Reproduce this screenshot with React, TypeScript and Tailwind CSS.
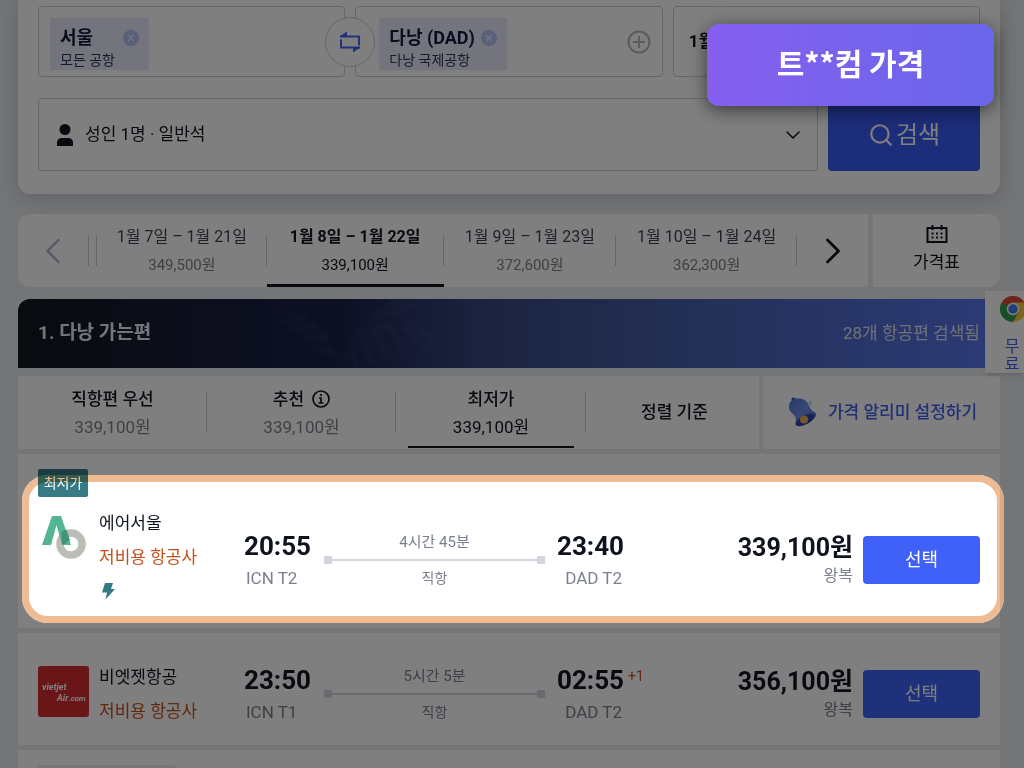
import { ChevronDown, ChevronLeft, ChevronRight, Search } from "lucide-react";
import clsx from "clsx";

const dates = [
  { label: "1월 7일 – 1월 21일", price: "349,500원" },
  { label: "1월 8일 – 1월 22일", price: "339,100원", active: true },
  { label: "1월 9일 – 1월 23일", price: "372,600원" },
  { label: "1월 10일 – 1월 24일", price: "362,300원" },
];

type Flight = {
  airline: string;
  logo: React.ReactNode;
  depart: string;
  from: string;
  arrive: string;
  to: string;
  duration: string;
  price: string;
  nextDay?: string;
  lowest?: boolean;
};

const flights: Flight[] = [
  {
    airline: "에어서울",
    logo: <AirSeoulLogo />,
    depart: "20:55",
    from: "ICN T2",
    arrive: "23:40",
    to: "DAD T2",
    duration: "4시간 45분",
    price: "339,100원",
    lowest: true,
  },
  {
    airline: "비엣젯항공",
    logo: <VietjetLogo />,
    depart: "23:50",
    from: "ICN T1",
    arrive: "02:55",
    to: "DAD T2",
    duration: "5시간 5분",
    price: "356,100원",
    nextDay: "+1",
  },
];

function AirSeoulLogo() {
  return (
    <svg viewBox="0 0 51 51" className="h-[51px] w-[51px] shrink-0">
      <path d="M14 4h9l10 29h-9L18.500 13 13 33H4z" fill="#53b592" />
      <circle cx="33" cy="32" r="11" fill="none" stroke="#8f968a" strokeOpacity="0.62" strokeWidth="7.500" />
      <path d="M23.500 20.500a15 15 0 0 1 5-3L32 28.500a4 4 0 0 0-4 3l-4 1z" fill="#3f9377" />
    </svg>
  );
}

function VietjetLogo() {
  return (
    <svg viewBox="0 0 51 51" className="h-[51px] w-[51px] shrink-0">
      <rect width="51" height="51" rx="3" fill="#d42a2f" />
      <g fill="#fff" fontFamily="Roboto, sans-serif" fontStyle="italic" fontWeight="700" fontSize="9">
        <text x="4" y="24">vietjet</text>
        <text x="19" y="35">
          Air<tspan fontSize="8">.com</tspan>
        </text>
      </g>
    </svg>
  );
}

function ChromeLogo() {
  return (
    <svg viewBox="0 0 48 48" className="h-[26px] w-[26px] shrink-0">
      <circle cx="24" cy="24" r="24" fill="#f8c93c" />
      <path d="M24 24 3.200 12A24 24 0 0 0 24 48l10.400-18z" fill="#2f9e4f" />
      <path d="M3.200 12a24 24 0 0 1 41.600 0H24L13.600 30z" fill="#dc4a3d" />
      <path d="M3.200 12 13.600 30 24 24z" fill="#2f9e4f" />
      <circle cx="24" cy="24" r="11.500" fill="#fff" />
      <circle cx="24" cy="24" r="8.800" fill="#3f7de8" />
    </svg>
  );
}

function BellIcon() {
  return (
    <svg viewBox="0 0 32 34" className="h-[34px] w-8 shrink-0">
      <defs>
        <linearGradient id="bell" x1="0" y1="0" x2="1" y2="1">
          <stop offset="0" stopColor="#4c6cd8" />
          <stop offset="0.5" stopColor="#6f90ea" />
          <stop offset="1" stopColor="#3f5cc8" />
        </linearGradient>
      </defs>
      <path d="m21 4 2 2 2.500-2-.5 3.500L27 9l-3 .5z" fill="#b8d4e8" />
      <circle cx="7.500" cy="3.500" r="2" fill="#2c47a8" />
      <path d="M3 11C3 5 7 2.500 12 2.500c6 0 9 2.500 11 7 1.500 4 3 5 6 7 2.500 2 .5 5.500-4 8.500-5 3.500-11.500 5.500-14 4-2-1.500-.5-5-2-8.500C7.500 17.500 3 16 3 11z" fill="url(#bell)" />
      <ellipse cx="19" cy="24" rx="10.500" ry="4.500" transform="rotate(-27 19 24)" fill="#2b46ad" />
      <circle cx="18" cy="23.500" r="4" fill="#f0b04c" />
    </svg>
  );
}

function CalendarIcon() {
  return (
    <svg viewBox="0 0 22 20" className="h-5 w-[22px]" fill="none" stroke="#0f1320" strokeWidth="2">
      <path d="M1.500 4h19v14h-19zM6.500 1v5M15.500 1v5" />
      <path d="M5.500 9.500h11M5.500 13.500h11" strokeDasharray="2 2.500" />
    </svg>
  );
}

function RemoveButton({ label }: { label: string }) {
  return (
    <button aria-label={label} className="flex h-4 w-4 items-center justify-center rounded-full bg-[#b4c0f4]">
      <svg viewBox="0 0 8 8" className="h-2 w-2" stroke="#e6eafa" strokeWidth="1.200">
        <path d="m1 1 6 6M7 1 1 7" />
      </svg>
    </button>
  );
}

function CityChip({ name, airport }: { name: string; airport: string }) {
  return (
    <div className="mt-1 min-w-[99px] bg-[#e6e9f8] px-2.5 pt-2">
      <div className="flex h-6 items-center justify-between gap-1.5">
        <strong className="text-lg font-bold text-[#0f1b3d]">{name}</strong>
        <RemoveButton label={`${name} 삭제`} />
      </div>
      <p className="text-sm leading-5 text-[#2c3756]">{airport}</p>
    </div>
  );
}

function SearchPanel() {
  return (
    <section className="shrink-0 rounded-b-xl bg-white px-5 pt-1.5 pb-[23px] shadow-[0_4px_20px_rgba(60,60,90,0.22)]">
      <div className="grid grid-cols-3 gap-2.5">
        <div className="flex h-[71px] items-center rounded border border-[#c9cdd6] px-[11px]">
          <CityChip name="서울" airport="모든 공항" />
        </div>
        <div className="relative flex h-[71px] items-center justify-between rounded border border-[#c9cdd6] pr-[11px] pl-[23px]">
          <button
            aria-label="출발지와 도착지 바꾸기"
            className="absolute top-2.5 -left-[31px] flex h-[50px] w-[50px] items-center justify-center rounded-full border border-[#c9cdd6] bg-white"
          >
            <svg viewBox="0 0 24 24" className="h-6 w-6" fill="none" stroke="#4664f0" strokeWidth="2">
              <path d="M2 6.500h19v9M22 17.500H3v-8" />
              <path d="M1.500 6.500 9 1.500v5zM22.500 17.500 15 22.500v-5z" fill="#4664f0" stroke="none" />
            </svg>
          </button>
          <CityChip name="다낭 (DAD)" airport="다낭 국제공항" />
          <button aria-label="도착지 추가">
            <svg viewBox="0 0 24 24" className="h-6 w-6" fill="none" stroke="#b4b6be" strokeWidth="2">
              <circle cx="12" cy="12" r="10.500" />
              <path d="M12 6v12M6 12h12" />
            </svg>
          </button>
        </div>
        <button className="h-[71px] rounded border border-[#c9cdd6] px-[15px] text-left text-[17px] font-bold text-[#0f1320]">
          1월 8일
        </button>
      </div>

      <div className="mt-[21px] flex gap-2.5">
        <div className="relative flex h-[73px] flex-1 items-center rounded border border-[#c9cdd6]">
          <svg viewBox="0 0 18 22" className="absolute left-[17px] h-[22px] w-[18px]" fill="#10131f">
            <circle cx="9" cy="5.500" r="5.500" />
            <path d="M1 22v-3.500a4.500 4.500 0 0 1 4.500-4.500h7a4.500 4.500 0 0 1 4.500 4.500V22z" />
          </svg>
          <select
            aria-label="인원 및 좌석 등급"
            className="h-full w-full appearance-none bg-transparent pr-12 pl-[46px] text-[17px] text-[#10131f]"
          >
            <option>성인 1명 · 일반석</option>
          </select>
          <ChevronDown className="pointer-events-none absolute right-3 h-6 w-6 text-[#10131f]" strokeWidth={1.5} />
        </div>
        <button className="flex w-[152px] items-center justify-center gap-0.5 rounded bg-[#3859f2] text-2xl text-white">
          <Search className="h-[26px] w-[26px]" strokeWidth={2} />
          검색
        </button>
      </div>
    </section>
  );
}

function DateStrip() {
  return (
    <div className="mt-5 flex h-[73px] shrink-0 gap-[5px]">
      <div className="flex flex-1 items-center rounded-l-xl bg-white">
        <button aria-label="이전 날짜" className="flex w-[70px] justify-center text-[#a9afc4]">
          <ChevronLeft className="h-11 w-11" strokeWidth={1.3} />
        </button>
        <div className="h-[31px] w-[9px] border-x border-[#c9cdd6]" />
        <div className="grid h-full flex-1 grid-cols-[170fr_177fr_173fr_181fr]">
          {dates.map((date) => (
            <button
              key={date.label}
              className={clsx(
                "relative flex flex-col items-center pt-[11px]",
                date.active ? "text-[#0f1320]" : "text-[#3b4258]"
              )}
            >
              <span className={clsx("text-base leading-6", date.active && "font-bold")}>{date.label}</span>
              <span className={clsx("mt-1 text-[15px] leading-6", !date.active && "text-[#7f828c]")}>
                {date.price}
              </span>
              <span className="absolute top-[21px] right-0 h-[31px] w-px bg-[#c9cdd6]" />
              {date.active && <span className="absolute inset-x-0 bottom-0 h-[3px] bg-[#0f1320]" />}
            </button>
          ))}
        </div>
        <button aria-label="다음 날짜" className="flex w-[71px] justify-center text-[#0f1320]">
          <ChevronRight className="h-11 w-11" strokeWidth={1.5} />
        </button>
      </div>
      <button className="flex w-[127px] flex-col items-center justify-center rounded-r-xl bg-white pb-0.5 text-[17px] text-[#0f1320]">
        <CalendarIcon />
        <span className="mt-1 leading-7">가격표</span>
      </button>
    </div>
  );
}

function RouteBanner() {
  return (
    <header className="relative mt-3 flex h-[69px] shrink-0 items-center justify-between overflow-hidden rounded-t-xl bg-[linear-gradient(90deg,#12151f,#1a2148_33%,#35457e_47%,#4860b0_70%,#5874ee)] px-5">
      {/* palm leaves */}
      <svg viewBox="0 0 180 69" className="absolute top-0 left-[250px] h-full w-[180px] blur-[2px]" fill="none" stroke="#5a6ab0" strokeOpacity="0.13">
        <path d="M72 69C60 35 45 18 5 8M72 69C95 30 130 15 172 42M72 69C85 25 110 5 150-5" strokeWidth="2" />
        <path d="M66 54 44 48M60 40 34 38M50 28 24 30M38 18 14 22M84 52l6 17M94 40l10 26M106 30l14 30M120 24l18 34M136 22l20 30M152 26l16 26M92 34l30-8M104 18l32-6M122 6l30 0" strokeWidth="5" />
      </svg>
      <h2 className="relative text-[19px] font-bold text-[#e8eaf2]">1. 다낭 가는편</h2>
      <p className="relative text-[17px] text-[#dfe3f2]">28개 항공편 검색됨</p>
    </header>
  );
}

function SortTabs() {
  const tab = "relative flex flex-col items-center pt-[9px] text-[17px] leading-7 text-[#0f1320]";
  const divider = <span className="absolute top-4 right-0 h-10 w-px bg-[#c9cdd6]" />;
  return (
    <div className="mt-2 flex h-[73px] shrink-0 gap-1">
      <div className="grid flex-1 grid-cols-[189fr_189fr_190fr_173fr] bg-white">
        <button className={tab}>
          <span className="font-medium">직항편 우선</span>
          <span className="text-[#7f828c]">339,100원</span>
          {divider}
        </button>
        <button className={tab}>
          <span className="flex items-center gap-2 font-medium">
            추천
            <svg viewBox="0 0 18 18" className="h-[18px] w-[18px]" fill="none" stroke="#0f1320" strokeWidth="1.700">
              <circle cx="9" cy="9" r="8" />
              <path d="M7 8h2v5M6.500 13h5M9 4v2" />
            </svg>
          </span>
          <span className="text-[#7f828c]">339,100원</span>
          {divider}
        </button>
        <button className={tab}>
          <span className="font-medium">최저가</span>
          <span>339,100원</span>
          {divider}
          <span className="absolute inset-x-3 bottom-px h-0.5 bg-[#0f1320]" />
        </button>
        <button className="pl-1 text-[17px] font-medium text-[#0f1320]">정렬 기준</button>
      </div>
      <button className="flex w-[237px] items-center justify-center gap-2.5 bg-white text-[17px] font-medium text-[#3f5fe8]">
        <BellIcon />
        가격 알리미 설정하기
      </button>
    </div>
  );
}

function FlightCard({ flight }: { flight: Flight }) {
  return (
    <article
      className={clsx(
        "relative mt-[5px] flex shrink-0 items-center bg-white px-5",
        flight.lowest ? "pt-[52px] pb-[14px]" : "pt-[27px] pb-[17px]"
      )}
    >
      {flight.lowest && (
        <>
          <span className="absolute top-[15px] left-5 flex h-7 w-[50px] items-center justify-center rounded-xs bg-[#357a85] text-sm text-white">
            최저가
          </span>
          {/* spotlight: dims everything around this card */}
          <div className="pointer-events-none absolute top-[21px] -right-1 bottom-[5px] left-1 z-20 rounded-[26px] border-7 border-[#eebb93] mix-blend-multiply shadow-[0_0_0_2000px_rgba(0,0,0,0.5)]" />
        </>
      )}

      <div className={clsx("flex w-[206px] items-start gap-2.5", flight.lowest && "pb-1.5")}>
        <div className="pt-1.5">{flight.logo}</div>
        <div className="text-[17px] leading-[34px]">
          <h3 className="text-[#0f1320]">{flight.airline}</h3>
          <p className="text-[#c4501c]">저비용 항공사</p>
          {flight.lowest && (
            <div className="flex h-[34px] items-center pl-0.5">
              <svg viewBox="0 0 14 18" className="h-[18px] w-3.5" fill="#357a85">
                <path d="M4 1h8L10 7h4L4.500 17.500 6 10.500H1z" />
              </svg>
            </div>
          )}
        </div>
      </div>

      <div className="w-20">
        <p className="text-[26px] leading-8 font-bold text-[#0f1320]">{flight.depart}</p>
        <p className="mt-1 pl-0.5 text-[17px] leading-6 text-[#7b7f8f]">{flight.from}</p>
      </div>

      <div className="flex-1 text-center text-[#7b7f8f]">
        <p className="text-[15px] leading-7">{flight.duration}</p>
        <div className="flex h-2 items-center">
          <span className="h-2 w-2 bg-[#d3d5de]" />
          <span className="h-0.5 flex-1 bg-[#d3d5de]" />
          <span className="h-2 w-2 bg-[#d3d5de]" />
        </div>
        <p className="text-sm leading-7">직항</p>
      </div>

      <div className="w-[172px] pl-3">
        <div className="relative w-fit text-right">
          <p className="text-[26px] leading-8 font-bold text-[#0f1320]">{flight.arrive}</p>
          <p className="mt-1 pr-0.5 text-[17px] leading-6 text-[#7b7f8f]">{flight.to}</p>
          {flight.nextDay && (
            <sup className="absolute top-0.5 left-full pl-1 text-sm leading-5 text-[#c4501c]">{flight.nextDay}</sup>
          )}
        </div>
      </div>

      <div className="w-[136px] text-right">
        <p className="text-[25px] leading-8 font-bold text-[#0f1320]">{flight.price}</p>
        <p className="text-base leading-6 text-[#7b7f8f]">왕복</p>
      </div>

      <button className="ml-2.5 h-12 w-[117px] rounded bg-[#3f61f7] text-lg text-white">선택</button>
    </article>
  );
}

export default function App() {
  return (
    <div className="relative isolate flex h-screen w-full flex-col overflow-hidden bg-[#e7eaed] pr-6 pl-[18px] font-[Roboto,'Noto_Sans_CJK_KR',sans-serif]">
      <SearchPanel />
      <DateStrip />
      <RouteBanner />
      <SortTabs />
      {flights.map((flight) => (
        <FlightCard key={flight.airline} flight={flight} />
      ))}
      <article className="mt-[5px] min-h-0 flex-1 overflow-hidden bg-white px-5 pt-[15px]">
        <div className="h-7 w-[138px] rounded-xs bg-[#e8ecee]" />
      </article>

      {/* side tab */}
      <a
        href="#"
        className="absolute top-[291px] right-0 z-10 flex h-[82px] w-[39px] flex-col items-end overflow-hidden bg-white pt-[5px] text-center text-base leading-[17px] text-[#3f5fe8] shadow-md"
      >
        <span className="-mr-0.5">
          <ChromeLogo />
        </span>
        <span className="mt-4 mr-1 w-4">무료</span>
      </a>

      {/* price label */}
      <div className="absolute top-6 right-[30px] z-30 flex h-[82px] w-[287px] items-center justify-center rounded-xl bg-linear-to-r from-[#855fee] to-[#6966ea] pb-1.5 font-['Noto_Sans_CJK_KR',sans-serif] text-3xl font-bold text-white shadow-[0_4px_18px_rgba(0,0,0,0.55)]">
        트**컴 가격
      </div>
    </div>
  );
}
